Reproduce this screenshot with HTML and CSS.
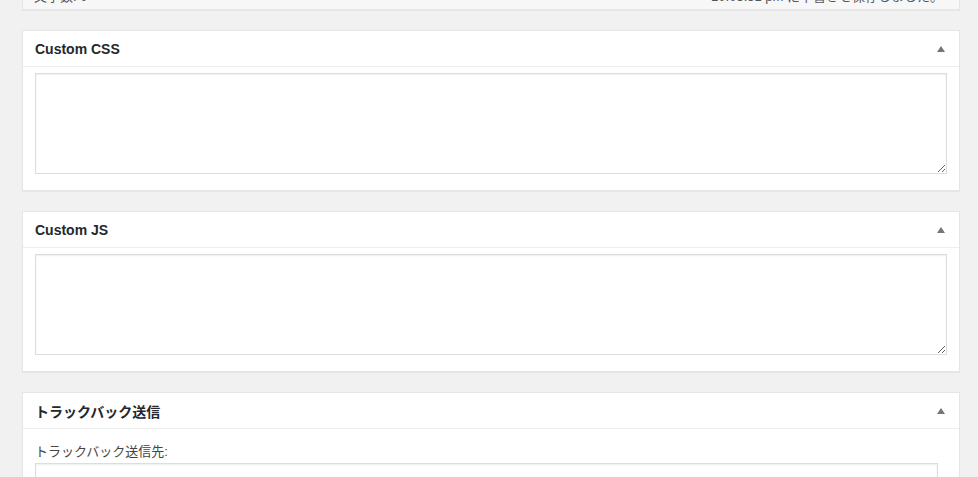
FILE: index.html
```html
<!DOCTYPE html>
<html lang="ja">
<head>
  <meta charset="UTF-8">
  <title>投稿の編集</title>
  <link rel="stylesheet" href="styles.css">
</head>
<body>
  <div class="wrap">
    <div class="status-info">
      <span>文字数: 0</span>
      <span>10:03:51 pm に下書きを保存しました。</span>
    </div>

    <div class="postbox">
      <div class="hndle">
        <span>Custom CSS</span>
        <span class="toggle"></span>
      </div>
      <div class="inside">
        <textarea class="code-area"></textarea>
      </div>
    </div>

    <div class="postbox">
      <div class="hndle">
        <span>Custom JS</span>
        <span class="toggle"></span>
      </div>
      <div class="inside">
        <textarea class="code-area"></textarea>
      </div>
    </div>

    <div class="postbox">
      <div class="hndle">
        <span>トラックバック送信</span>
        <span class="toggle"></span>
      </div>
      <div class="inside inside-form">
        <label for="trackback_url">トラックバック送信先:</label>
        <input type="text" id="trackback_url">
      </div>
    </div>
  </div>
</body>
</html>
```

FILE: styles.css
```css
body {
  font-family: "Liberation Sans", "Noto Sans CJK JP", sans-serif;
  background-color: #f1f1f1;
  color: #444;
  margin: 0;
  padding: 0;
  font-size: 13px;
  overflow: hidden;
}
.wrap {
  width: 938px;
  margin-left: 22px;
}
.status-info {
  display: flex;
  justify-content: space-between;
  margin-top: -31px;
  margin-bottom: 20px;
  height: 41px;
  box-sizing: border-box;
  padding: 18px 16px 3px 11px;
  line-height: 18px;
  background-color: #f7f7f7;
  border: 1px solid #e5e5e5;
  box-shadow: 0 1px 1px rgba(0, 0, 0, 0.04);
  color: #555;
}
.postbox {
  background-color: white;
  border: 1px solid #e5e5e5;
  box-shadow: 0 1px 1px rgba(0, 0, 0, 0.04);
  margin-bottom: 20px;
}
.hndle {
  display: flex;
  justify-content: space-between;
  align-items: center;
  height: 36px;
  box-sizing: border-box;
  padding: 0 14px 0 12px;
  border-bottom: 1px solid #eee;
  font-size: 14px;
  font-weight: bold;
  color: #23282d;
}
.toggle {
  width: 0;
  height: 0;
  border-left: 4px solid transparent;
  border-right: 4px solid transparent;
  border-bottom: 6px solid #72777c;
  margin-top: 1px;
}
.inside {
  padding: 6px 12px 16px;
}
.code-area {
  display: block;
  width: 100%;
  height: 101px;
  box-sizing: border-box;
  margin: 0;
  border: 1px solid #ddd;
  box-shadow: inset 0 1px 2px rgba(0, 0, 0, 0.07);
  background-color: white;
}
.inside-form {
  padding-top: 14px;
}
.inside-form label {
  display: block;
  line-height: 18px;
  margin-bottom: 2px;
  color: #444;
}
#trackback_url {
  display: block;
  width: 99%;
  height: 30px;
  box-sizing: border-box;
  margin: 0;
  border: 1px solid #ddd;
  box-shadow: inset 0 1px 2px rgba(0, 0, 0, 0.07);
}
```
